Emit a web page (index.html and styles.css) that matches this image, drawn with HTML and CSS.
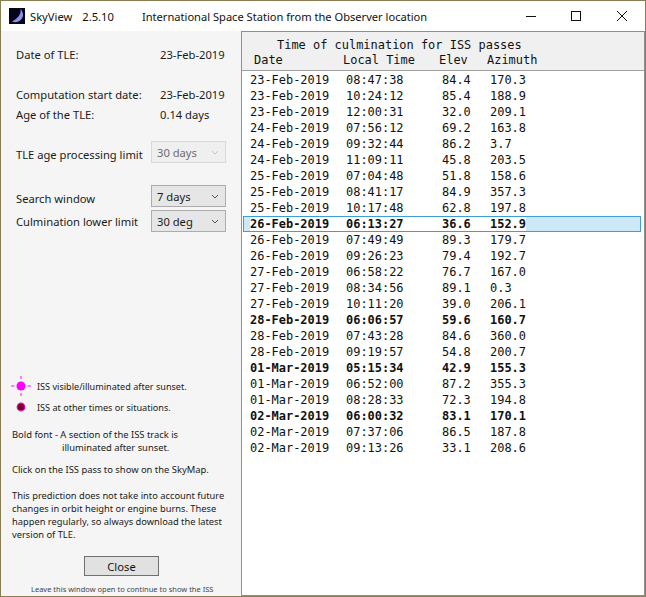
FILE: index.html
```html
<!DOCTYPE html>
<html lang="en">
<head>
<meta charset="utf-8">
<title>SkyView</title>
<link rel="stylesheet" href="styles.css">
</head>
<body>
<div class="window">
  <header class="titlebar">
    <svg class="app-icon" width="16" height="16" viewBox="0 0 16 16"><rect width="16" height="16" fill="#05051a"/><path d="M11.500 1C12.500 6 9 10.500 3 13.500C8 16 13.500 12 14 7.500C14.300 5 13 2.500 11.500 1Z" fill="#8f8ff0"/></svg>
    <span class="app-name">SkyView</span>
    <span class="app-version">2.5.10</span>
    <span class="app-title">International Space Station from the Observer location</span>
    <div class="controls">
      <svg width="10" height="10" viewBox="0 0 10 10"><path d="M0 5.500H10" stroke="#111" fill="none"/></svg>
      <svg width="10" height="10" viewBox="0 0 10 10"><rect x="0.500" y="0.500" width="9" height="9" stroke="#111" fill="none"/></svg>
      <svg class="ctl-close" width="10" height="10" viewBox="0 0 10 10"><path d="M0 0L10 10M10 0L0 10" stroke="#111" fill="none"/></svg>
    </div>
  </header>
  <div class="content">
    <aside class="side">
      <div class="kv first"><span>Date of TLE:</span><span>23-Feb-2019</span></div>
      <div class="kv second"><span>Computation start date:</span><span>23-Feb-2019</span></div>
      <div class="kv third"><span>Age of the TLE:</span><span>0.14 days</span></div>
      <div class="field f-age"><span>TLE age processing limit</span><div class="select disabled">30 days<svg width="8" height="5" viewBox="0 0 8 5"><path d="M1 1L4 4L7 1" stroke="#c4c4c4" fill="none"/></svg></div></div>
      <div class="field f-search"><span>Search window</span><div class="select">7 days<svg width="8" height="5" viewBox="0 0 8 5"><path d="M1 1L4 4L7 1" stroke="#555" fill="none"/></svg></div></div>
      <div class="field f-limit"><span>Culmination lower limit</span><div class="select">30 deg<svg width="8" height="5" viewBox="0 0 8 5"><path d="M1 1L4 4L7 1" stroke="#555" fill="none"/></svg></div></div>
      <div class="legend first-legend">
        <svg width="20" height="20" viewBox="0 0 20 20"><path d="M10 0V3M10 17V20M0 10H3.500M16.500 10H20" stroke="#ff80ff" stroke-width="2" fill="none"/><circle cx="10" cy="10" r="4.500" fill="#ff00ff"/></svg>
        <span>ISS visible/illuminated after sunset.</span>
      </div>
      <div class="legend second-legend">
        <svg width="20" height="20" viewBox="0 0 20 20"><circle cx="10" cy="10" r="3.800" fill="#7a0020" stroke="#e000c8" stroke-width="1.200"/></svg>
        <span>ISS at other times or situations.</span>
      </div>
      <p class="note bold-note">Bold font - A section of the ISS track is<br><span class="indent">illuminated after sunset.</span></p>
      <p class="note click-note">Click on the ISS pass to show on the SkyMap.</p>
      <p class="note warn-note">This prediction does not take into account future changes in orbit height or engine burns. These happen regularly, so always download the latest version of TLE.</p>
      <button class="close" type="button">Close</button>
      <p class="leave">Leave this window open to continue to show the ISS</p>
    </aside>
    <main class="panel">
      <div class="panel-head">
        <div class="mono head-title">Time of culmination for ISS passes</div>
        <div class="mono head-cols"><span>Date</span><span>Local Time</span><span>Elev</span><span>Azimuth</span></div>
      </div>
      <div class="rows">
        <div class="mono row"><span>23-Feb-2019</span><span>08:47:38</span><span>84.4</span><span>170.3</span></div>
        <div class="mono row"><span>23-Feb-2019</span><span>10:24:12</span><span>85.4</span><span>188.9</span></div>
        <div class="mono row"><span>23-Feb-2019</span><span>12:00:31</span><span>32.0</span><span>209.1</span></div>
        <div class="mono row"><span>24-Feb-2019</span><span>07:56:12</span><span>69.2</span><span>163.8</span></div>
        <div class="mono row"><span>24-Feb-2019</span><span>09:32:44</span><span>86.2</span><span>3.7</span></div>
        <div class="mono row"><span>24-Feb-2019</span><span>11:09:11</span><span>45.8</span><span>203.5</span></div>
        <div class="mono row"><span>25-Feb-2019</span><span>07:04:48</span><span>51.8</span><span>158.6</span></div>
        <div class="mono row"><span>25-Feb-2019</span><span>08:41:17</span><span>84.9</span><span>357.3</span></div>
        <div class="mono row"><span>25-Feb-2019</span><span>10:17:48</span><span>62.8</span><span>197.8</span></div>
        <div class="mono selected b"><div class="row-cells"><span>26-Feb-2019</span><span>06:13:27</span><span>36.6</span><span>152.9</span></div></div>
        <div class="mono row"><span>26-Feb-2019</span><span>07:49:49</span><span>89.3</span><span>179.7</span></div>
        <div class="mono row"><span>26-Feb-2019</span><span>09:26:23</span><span>79.4</span><span>192.7</span></div>
        <div class="mono row"><span>27-Feb-2019</span><span>06:58:22</span><span>76.7</span><span>167.0</span></div>
        <div class="mono row"><span>27-Feb-2019</span><span>08:34:56</span><span>89.1</span><span>0.3</span></div>
        <div class="mono row"><span>27-Feb-2019</span><span>10:11:20</span><span>39.0</span><span>206.1</span></div>
        <div class="mono row b"><span>28-Feb-2019</span><span>06:06:57</span><span>59.6</span><span>160.7</span></div>
        <div class="mono row"><span>28-Feb-2019</span><span>07:43:28</span><span>84.6</span><span>360.0</span></div>
        <div class="mono row"><span>28-Feb-2019</span><span>09:19:57</span><span>54.8</span><span>200.7</span></div>
        <div class="mono row b"><span>01-Mar-2019</span><span>05:15:34</span><span>42.9</span><span>155.3</span></div>
        <div class="mono row"><span>01-Mar-2019</span><span>06:52:00</span><span>87.2</span><span>355.3</span></div>
        <div class="mono row"><span>01-Mar-2019</span><span>08:28:33</span><span>72.3</span><span>194.8</span></div>
        <div class="mono row b"><span>02-Mar-2019</span><span>06:00:32</span><span>83.1</span><span>170.1</span></div>
        <div class="mono row"><span>02-Mar-2019</span><span>07:37:06</span><span>86.5</span><span>187.8</span></div>
        <div class="mono row"><span>02-Mar-2019</span><span>09:13:26</span><span>33.1</span><span>208.6</span></div>
      </div>
    </main>
  </div>
</div>
</body>
</html>
```

FILE: styles.css
```css
* { box-sizing: border-box; }
html, body { margin: 0; padding: 0; }
body {
  width: 646px;
  height: 597px;
  overflow: hidden;
  font-family: "Noto Sans", "Open Sans", sans-serif;
  color: #111;
}
.window {
  width: 646px;
  height: 597px;
  display: flex;
  flex-direction: column;
  border: 1px solid #8a7d52;
  background: #f5f5f5;
}
.titlebar {
  height: 30px;
  flex: none;
  background: #fff;
  display: flex;
  align-items: center;
  padding-left: 8px;
  font-size: 11.200px;
}
.app-icon { margin-right: 5px; }
.app-version { margin-left: 10px; }
.app-title { margin-left: 28px; font-size: 11.120px; }
.controls {
  margin-left: auto;
  display: flex;
  gap: 35px;
  padding-right: 18px;
}
.ctl-close { margin-left: 1px; }
.content { flex: 1; display: flex; min-height: 0; }
.side {
  width: 240px;
  flex: none;
  padding-left: 15px;
  display: flex;
  flex-direction: column;
  font-size: 11.200px;
  color: #1a1a1a;
}
.kv { display: flex; height: 16px; line-height: 16px; }
.kv span:first-child { width: 144px; }
.first { margin-top: 16px; }
.second { margin-top: 24px; }
.third { margin-top: 4px; }
.field { display: flex; align-items: center; justify-content: space-between; height: 22px; padding-right: 15px; }
.f-age { margin-top: 18px; }
.f-age > span { padding-top: 4px; }
.f-search { margin-top: 22px; }
.f-search > span { padding-top: 4px; }
.f-limit { margin-top: 3px; }
.select {
  width: 75px;
  height: 22px;
  border: 1px solid #acacac;
  background: #e6e6e6;
  padding: 0 6px 0 5px;
  display: flex;
  align-items: center;
  justify-content: space-between;
}
.select.disabled { background: #efefef; border-color: #d9d9d9; color: #6d6d6d; }
.legend {
  display: flex;
  align-items: center;
  height: 20px;
  margin-left: -5px;
  gap: 6px;
  font-size: 9.100px;
}
.first-legend { margin-top: 144px; }
.second-legend { margin-top: 1px; }
.note { margin: 0 0 0 -4px; font-size: 9.400px; line-height: 13px; width: 225px; }
.bold-note { margin-top: 11px; }
.indent { margin-left: 50px; }
.click-note { margin-top: 9px; }
.warn-note { margin-top: 13px; font-size: 9.300px; }
.close {
  width: 75px;
  height: 20px;
  margin: 15px 0 0 68px;
  border: 1px solid #6f6f6f;
  background: #e1e1e1;
  font: 11.200px "Noto Sans", sans-serif;
  color: #111;
  padding: 0;
}
.leave { margin: 8px 0 0 15px; font-size: 7.500px; line-height: 11px; color: #444; white-space: nowrap; }
.panel {
  flex: 1;
  display: flex;
  flex-direction: column;
  border: 1px solid #8f8f8f;
  background: #fff;
}
.panel-head {
  height: 39px;
  flex: none;
  background: #f0f0f0;
  border-bottom: 1px solid #a0a0a0;
  padding-top: 5px;
}
.mono {
  font: 11.960px/16px "DejaVu Sans Mono", monospace;
  color: #111;
  white-space: pre;
}
.head-title { padding-left: 35px; }
.head-cols {
  padding-left: 12px;
  margin-top: -1px;
  display: grid;
  grid-template-columns: 89px 96px 48px auto;
}
.rows { padding-top: 1px; }
.row {
  height: 16px;
  padding-left: 8px;
  display: grid;
  grid-template-columns: 96px 96px 48px auto;
}
.b { font-weight: bold; }
.selected {
  height: 16px;
  margin: 0 3px 0 1px;
  background: #cde8f7;
  border: 1px solid #3c9fd6;
  padding-left: 6px;
  line-height: 14px;
}
.row-cells {
  display: inline-grid;
  grid-template-columns: 96px 96px 48px auto;
  background: #fff;
}
```
